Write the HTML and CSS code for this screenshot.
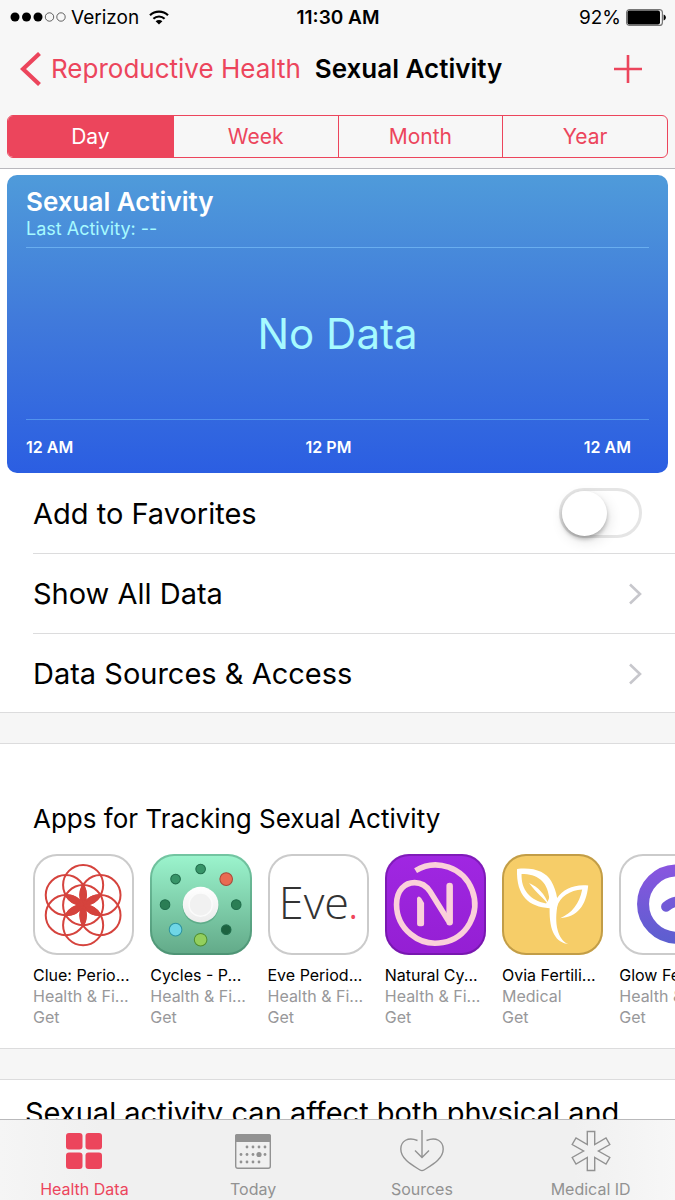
FILE: index.html
```html
<!DOCTYPE html>
<html lang="en">
<head>
    <meta charset="UTF-8">
    <meta name="viewport" content="width=device-width, initial-scale=1.0">
    <title>Sexual Activity</title>
    <link rel="stylesheet" href="styles.css">
</head>
<body>
    <div class="app">
        <header class="header">
            <div class="status-bar">
                <div class="status-left">
                    <svg class="signal" width="56" height="10" viewBox="0 0 56 10">
                        <circle cx="5" cy="5" r="4.5"/>
                        <circle cx="16.5" cy="5" r="4.5"/>
                        <circle cx="28" cy="5" r="4.5"/>
                        <circle class="empty" cx="39.5" cy="5" r="4.2"/>
                        <circle class="empty" cx="51" cy="5" r="4.2"/>
                    </svg>
                    <span>Verizon</span>
                    <svg class="wifi" width="20" height="15" viewBox="0 0 20 15">
                        <path d="M1 5.2a13 13 0 0 1 18 0"/>
                        <path d="M4.4 8.8a8 8 0 0 1 11.2 0"/>
                        <path class="wifi-dot" d="M10 14.6L6.6 11.3a4.8 4.8 0 0 1 6.8 0z"/>
                    </svg>
                </div>
                <span class="clock">11:30 AM</span>
                <div class="status-right">
                    <span>92%</span>
                    <svg width="40" height="17" viewBox="0 0 40 17">
                        <rect x="0.6" y="0.6" width="35.8" height="15.8" rx="3" fill="none" stroke="#777" stroke-width="1.2"/>
                        <rect x="1.5" y="1.5" width="32.5" height="14" rx="2"/>
                        <path d="M37.6 5.5c3 1 3 5 0 6z"/>
                    </svg>
                </div>
            </div>

            <nav class="nav-bar">
                <a class="back" href="#">
                    <svg width="22" height="34" viewBox="0 0 22 34">
                        <path d="M19.5 1.5L3 17l16.5 15.5" fill="none" stroke="currentColor" stroke-width="4.2"/>
                    </svg>
                    <span>Reproductive Health</span>
                </a>
                <h1>Sexual Activity</h1>
                <button class="add" type="button" aria-label="Add">
                    <svg width="28" height="28" viewBox="0 0 28 28">
                        <path d="M14 0v28M0 14h28" stroke="currentColor" stroke-width="2.6"/>
                    </svg>
                </button>
            </nav>

            <div class="segments">
                <button type="button" class="segment active">Day</button>
                <button type="button" class="segment">Week</button>
                <button type="button" class="segment">Month</button>
                <button type="button" class="segment">Year</button>
            </div>
        </header>

        <main class="content">
            <section class="chart-card">
                <div class="chart-head">
                    <h2>Sexual Activity</h2>
                    <p>Last Activity: --</p>
                </div>
                <div class="chart-body">No Data</div>
                <div class="chart-axis">
                    <span>12 AM</span>
                    <span>12 PM</span>
                    <span>12 AM</span>
                </div>
            </section>

            <section class="rows">
                <div class="row">
                    <label for="favorites">Add to Favorites</label>
                    <input class="switch" type="checkbox" id="favorites">
                </div>
                <a class="row" href="#">
                    <span>Show All Data</span>
                    <svg class="chevron" width="14" height="22" viewBox="0 0 14 22"><path d="M2 1.5L12 11 2 20.5"/></svg>
                </a>
                <a class="row" href="#">
                    <span>Data Sources &amp; Access</span>
                    <svg class="chevron" width="14" height="22" viewBox="0 0 14 22"><path d="M2 1.5L12 11 2 20.5"/></svg>
                </a>
            </section>

            <section class="apps">
                <h3>Apps for Tracking Sexual Activity</h3>
                <div class="app-list">
                    <a class="app-item" href="#">
                        <div class="app-icon">
                            <svg viewBox="0 0 101 101">
                                <g transform="translate(50 51)" fill="none" stroke="#d5433d" stroke-width="2">
                                    <circle r="20"/>
                                    <circle cx="0" cy="-20" r="20"/>
                                    <circle cx="17.3" cy="-10" r="20"/>
                                    <circle cx="17.3" cy="10" r="20"/>
                                    <circle cx="0" cy="20" r="20"/>
                                    <circle cx="-17.3" cy="10" r="20"/>
                                    <circle cx="-17.3" cy="-10" r="20"/>
                                    <g fill="#d5433d">
                                        <path d="M0 0A20 20 0 0 1 0-20A20 20 0 0 1 0 0"/>
                                        <path transform="rotate(60)" d="M0 0A20 20 0 0 1 0-20A20 20 0 0 1 0 0"/>
                                        <path transform="rotate(120)" d="M0 0A20 20 0 0 1 0-20A20 20 0 0 1 0 0"/>
                                        <path transform="rotate(180)" d="M0 0A20 20 0 0 1 0-20A20 20 0 0 1 0 0"/>
                                        <path transform="rotate(240)" d="M0 0A20 20 0 0 1 0-20A20 20 0 0 1 0 0"/>
                                        <path transform="rotate(300)" d="M0 0A20 20 0 0 1 0-20A20 20 0 0 1 0 0"/>
                                    </g>
                                </g>
                            </svg>
                        </div>
                        <p class="app-name">Clue: Perio...</p>
                        <p>Health &amp; Fi...</p>
                        <p>Get</p>
                    </a>
                    <a class="app-item" href="#">
                        <div class="app-icon cycles">
                            <svg viewBox="0 0 101 101">
                                <defs>
                                    <linearGradient id="knob" x1="0" y1="0" x2="0" y2="1">
                                        <stop offset="0" stop-color="#fff"/>
                                        <stop offset="1" stop-color="#ececec"/>
                                    </linearGradient>
                                </defs>
                                <g stroke="#1f6b4a" stroke-width="1">
                                    <circle cx="50.5" cy="15" r="4.8" fill="#379468"/>
                                    <circle cx="25.5" cy="25" r="4.8" fill="#379468"/>
                                    <circle cx="15" cy="50.5" r="4.8" fill="#2b7e55"/>
                                    <circle cx="86" cy="50.5" r="4.8" fill="#2b7e55"/>
                                    <circle cx="76" cy="75.5" r="4.8" fill="#1d6340"/>
                                    <circle cx="76" cy="25" r="6.3" fill="#e96a52" stroke="#a8493a"/>
                                    <circle cx="25.5" cy="75.5" r="6.3" fill="#6fd6e6" stroke="#2c93a0"/>
                                    <circle cx="50.5" cy="85.5" r="6.3" fill="#93cf5d" stroke="#4e8c30"/>
                                </g>
                                <circle cx="50.5" cy="52" r="18" fill="#3f8f6c" opacity="0.4"/>
                                <circle cx="50.5" cy="50.5" r="17.8" fill="url(#knob)"/>
                                <circle cx="50.5" cy="50.5" r="11.5" fill="#f1f1f1" stroke="#fbfbfb" stroke-width="1.5"/>
                            </svg>
                        </div>
                        <p class="app-name">Cycles - P...</p>
                        <p>Health &amp; Fi...</p>
                        <p>Get</p>
                    </a>
                    <a class="app-item" href="#">
                        <div class="app-icon eve"><span>Eve<b>.</b></span></div>
                        <p class="app-name">Eve Period...</p>
                        <p>Health &amp; Fi...</p>
                        <p>Get</p>
                    </a>
                    <a class="app-item" href="#">
                        <div class="app-icon natural">
                            <svg viewBox="0 0 101 101">
                                <g fill="none" stroke="#fbd0da" stroke-linejoin="round">
                                    <path stroke-width="5.6" d="M30.5 16.5A39 39 0 1 1 11.5 50.3C11.5 36 20 28.5 29.5 28.5C37 28.5 41.5 32 45 37.5L63.5 67"/>
                                    <path stroke-width="6.5" stroke-linecap="round" d="M64.5 32v36"/>
                                </g>
                                <path fill="#fbd0da" d="M32 44q1.5-3 4 0l3 5v20.5q0 2.5-2.5 2.5h-2q-2.5 0-2.5-2.5z"/>
                            </svg>
                        </div>
                        <p class="app-name">Natural Cy...</p>
                        <p>Health &amp; Fi...</p>
                        <p>Get</p>
                    </a>
                    <a class="app-item" href="#">
                        <div class="app-icon ovia">
                            <svg viewBox="0 0 101 101">
                                <g fill="#fff">
                                    <path fill-rule="evenodd" d="M15 15C32 13 44 18 49 27C52 32 54 38 55 44C61 35 72 30 86 31.500C84 52 75 63 58 64C70 59 77 50 80 35.500C68 36 57 43 55 53C52 73 57 86 66.500 90C54 88 47 78 47.500 54C27 53 14 42 15 15ZM19.500 20C19 36 28 46 44 49.500C46 47 47 45 47 43C45 27 35 20 19.500 20Z"/>
                                    <path d="M27 29C36 33 43 40 46.500 51C41 43 35 40 27 29Z"/>
                                </g>
                            </svg>
                        </div>
                        <p class="app-name">Ovia Fertili...</p>
                        <p>Medical</p>
                        <p>Get</p>
                    </a>
                    <a class="app-item" href="#">
                        <div class="app-icon">
                            <svg viewBox="0 0 101 101">
                                <defs>
                                    <linearGradient id="glow" x1="0" y1="10" x2="0" y2="90" gradientUnits="userSpaceOnUse">
                                        <stop offset="0" stop-color="#8a55e0"/>
                                        <stop offset="1" stop-color="#5b5fcf"/>
                                    </linearGradient>
                                </defs>
                                <g fill="none" stroke="url(#glow)">
                                    <circle cx="57.5" cy="50" r="33.5" stroke-width="12"/>
                                    <path d="M47 52.5Q57 44 67 50" stroke-width="10" stroke-linecap="round"/>
                                </g>
                            </svg>
                        </div>
                        <p class="app-name">Glow Fertil...</p>
                        <p>Health &amp; Fi...</p>
                        <p>Get</p>
                    </a>
                </div>
            </section>

            <section class="about">
                <p>Sexual activity can affect both physical and</p>
            </section>
        </main>

        <nav class="tab-bar">
            <a class="tab active" href="#">
                <svg width="36" height="42" viewBox="0 0 36 42">
                    <g fill="currentColor">
                        <rect x="0" y="3" width="16.5" height="16.5" rx="3"/>
                        <rect x="19.5" y="3" width="16.5" height="16.5" rx="3"/>
                        <rect x="0" y="22.5" width="16.5" height="16.5" rx="3"/>
                        <rect x="19.5" y="22.5" width="16.5" height="16.5" rx="3"/>
                    </g>
                </svg>
                <span>Health Data</span>
            </a>
            <a class="tab" href="#">
                <svg width="36" height="42" viewBox="0 0 36 42">
                    <rect x="0.7" y="4.7" width="34.6" height="33.6" rx="2" fill="none" stroke="currentColor" stroke-width="1.4"/>
                    <path d="M0 12V6q0-2 2-2h32q2 0 2 2v6z" fill="currentColor"/>
                    <g fill="currentColor">
                        <circle cx="12" cy="17" r="1.4"/>
                        <circle cx="18" cy="17" r="1.4"/>
                        <circle cx="24" cy="17" r="1.4"/>
                        <circle cx="30" cy="17" r="1.4"/>
                        <circle cx="6" cy="24.5" r="1.4"/>
                        <circle cx="12" cy="24.5" r="1.4"/>
                        <circle cx="18" cy="24.5" r="1.4"/>
                        <circle cx="24" cy="24.5" r="2.6"/>
                        <circle cx="30" cy="24.5" r="1.4"/>
                        <circle cx="6" cy="32" r="1.4"/>
                        <circle cx="12" cy="32" r="1.4"/>
                        <circle cx="18" cy="32" r="1.4"/>
                        <circle cx="24" cy="32" r="1.4"/>
                    </g>
                </svg>
                <span>Today</span>
            </a>
            <a class="tab" href="#">
                <svg width="44" height="42" viewBox="0 0 44 42">
                    <g fill="none" stroke="currentColor" stroke-width="1.4">
                        <path d="M17.5 10.5C8 6.5 0.8 11 0.8 19C0.8 29 12 35 20 40Q22 41.2 24 40C32 35 43.2 29 43.2 19C43.2 11 36 6.5 26.5 10.5"/>
                        <path d="M22 0v27.5M15 20.5l7 7 7-7"/>
                    </g>
                </svg>
                <span>Sources</span>
            </a>
            <a class="tab" href="#">
                <svg width="40" height="42" viewBox="0 0 40 42">
                    <path transform="translate(20 21)" fill="none" stroke="currentColor" stroke-width="1.4" d="M-3.7-19.5H3.7V-6.4L15-13 18.800-6.500 7.400 0 18.800 6.500 15 13 3.700 6.400V19.500H-3.700V6.400L-15 13-18.800 6.500-7.400 0-18.800-6.500-15-13-3.700-6.400Z"/>
                </svg>
                <span>Medical ID</span>
            </a>
        </nav>
    </div>
</body>
</html>
```
FILE: styles.css
```css
* {
    margin: 0;
    padding: 0;
    box-sizing: border-box;
}

body {
    font-family: Inter, "Liberation Sans", sans-serif;
    background: #fff;
    color: #000;
}

a {
    color: inherit;
    text-decoration: none;
}

button {
    font: inherit;
    color: inherit;
    background: none;
    border: none;
    cursor: pointer;
}

svg {
    display: block;
    flex-shrink: 0;
}

.app {
    display: flex;
    flex-direction: column;
    height: 100vh;
    overflow: hidden;
}

/* Header */
.header {
    background: #f7f7f7;
    border-bottom: 1px solid #b9b8bd;
    padding-bottom: 10px;
}

.status-bar {
    display: grid;
    grid-template-columns: 1fr auto 1fr;
    align-items: center;
    height: 34px;
    padding: 0 9px 0 10px;
    font-size: 19px;
}

.status-left,
.status-right {
    display: flex;
    align-items: center;
    gap: 5px;
}

.status-right {
    justify-content: flex-end;
}

.signal .empty {
    fill: none;
    stroke: #000;
    stroke-width: 0.6;
}

.wifi {
    margin-left: 5px;
    fill: none;
    stroke: #000;
    stroke-width: 2.2;
}

.wifi .wifi-dot {
    fill: #000;
    stroke: none;
}

.clock {
    font-weight: 600;
}

.nav-bar {
    display: flex;
    align-items: center;
    height: 69px;
    padding: 0 33px 0 20px;
    font-size: 26px;
    white-space: nowrap;
}

.back {
    display: flex;
    align-items: center;
    gap: 9px;
    color: #ec455c;
}

.nav-bar h1 {
    margin-left: 14px;
    font-size: 26px;
    font-weight: 600;
}

.add {
    margin-left: auto;
    color: #ec455c;
}

.segments {
    display: grid;
    grid-template-columns: repeat(4, 1fr);
    margin: 12px 7px 0;
    border: 1px solid #ec455c;
    border-radius: 6px;
    overflow: hidden;
    color: #ec455c;
    font-size: 21px;
}

.segment {
    height: 41px;
}

.segment + .segment {
    border-left: 1px solid #ec455c;
}

.segment.active {
    background: #ec455c;
    color: #fff;
}

/* Scrolling content */
.content {
    flex: 1;
    min-height: 0;
    overflow: hidden auto;
    scrollbar-width: none;
}

.chart-card {
    display: flex;
    flex-direction: column;
    margin: 6px 7px 0;
    padding: 11px 19px 0;
    border-radius: 10px;
    background: linear-gradient(#4f9bda, #4079db 50%, #2b5ee2);
    color: #fff;
}

.chart-head {
    border-bottom: 1px solid #69aeef;
    height: 62px;
}

.chart-head h2 {
    font-size: 26px;
    line-height: 32px;
    font-weight: 600;
}

.chart-head p {
    font-size: 18px;
    line-height: 22px;
    color: #a6faff;
}

.chart-body {
    display: flex;
    align-items: center;
    justify-content: center;
    height: 172px;
    border-bottom: 1px solid #5293ee;
    font-size: 42px;
    color: #a6faff;
}

.chart-axis {
    display: flex;
    justify-content: space-between;
    align-items: center;
    height: 53px;
    padding-right: 18px;
    font-size: 16px;
    font-weight: 600;
}

.rows {
    padding-left: 33px;
}

.row {
    display: flex;
    align-items: center;
    justify-content: space-between;
    height: 80px;
    padding-right: 33px;
    font-size: 29px;
}

.row + .row {
    border-top: 1px solid #dcdcdd;
}

.switch {
    appearance: none;
    width: 83px;
    height: 50px;
    border: 3px solid #e5e5e5;
    border-radius: 25px;
    background: #fff;
    cursor: pointer;
}

.switch::before {
    content: '';
    display: block;
    width: 45px;
    height: 45px;
    border-radius: 50%;
    background: #fff;
    box-shadow: 0 3px 4px rgba(0, 0, 0, 0.25), 2px 5px 14px rgba(0, 0, 0, 0.12);
}

.switch:checked {
    background: #4cd964;
    border-color: #4cd964;
}

.switch:checked::before {
    margin-left: auto;
}

.chevron {
    fill: none;
    stroke: #c7c7cc;
    stroke-width: 2.6;
}

/* App suggestions, with a grey band above and below */
.apps {
    padding: 58px 0 21px 33px;
    border-top: 30px solid #f6f6f6;
    border-bottom: 30px solid #f6f6f6;
    box-shadow: inset 0 1px #dcdcdd, inset 0 -1px #dcdcdd, 0 -1px #dcdcdd;
    overflow: hidden;
}

.apps h3 {
    font-size: 26px;
    line-height: 36px;
    font-weight: 400;
}

.app-list {
    display: flex;
    gap: 16px;
    margin-top: 17px;
}

.app-item {
    flex: 0 0 15vw;
    font-size: 16px;
    line-height: 21px;
    color: #98989a;
    white-space: nowrap;
}

.app-icon {
    aspect-ratio: 1;
    margin-bottom: 10px;
    border-radius: 24px;
    background: #fff;
    box-shadow: inset 0 0 0 2px #cbcbcb;
}

.app-icon.cycles {
    background: linear-gradient(#9cf5ce, #62a988);
    box-shadow: inset 0 0 0 2px rgba(40, 110, 80, 0.35);
}

.app-icon.natural {
    background: linear-gradient(#a027e2, #941fd3);
    box-shadow: inset 0 0 0 2px rgba(70, 10, 110, 0.35);
}

.app-icon.ovia {
    background: #f6cd68;
    box-shadow: inset 0 0 0 2px rgba(130, 100, 30, 0.45);
}

.app-icon.eve {
    display: flex;
    align-items: center;
    justify-content: center;
    padding-bottom: 6px;
    font-family: "Open Sans", Lato, sans-serif;
    font-size: 45px;
    font-weight: 300;
    line-height: 1;
    color: #333;
}

.eve b {
    font-size: 32px;
    font-weight: 400;
    color: #f0455a;
}

.app-name {
    color: #000;
}

.about {
    padding: 15px 25px;
    border-top: 1px solid #dcdcdd;
    font-size: 29px;
    line-height: 36px;
    white-space: nowrap;
}

/* Tabs */
.tab-bar {
    display: grid;
    grid-template-columns: repeat(4, 1fr);
    height: 81px;
    border-top: 1px solid #b9b9bb;
    background: linear-gradient(90deg, #f5f5f5, #f0f0f0 15%, #f0f0f0 85%, #f7f7f7);
}

.tab {
    display: flex;
    flex-direction: column;
    align-items: center;
    gap: 7px;
    padding-top: 10px;
    font-size: 16px;
    line-height: 20px;
    color: #929292;
}

.tab.active {
    color: #ec455c;
}
```
